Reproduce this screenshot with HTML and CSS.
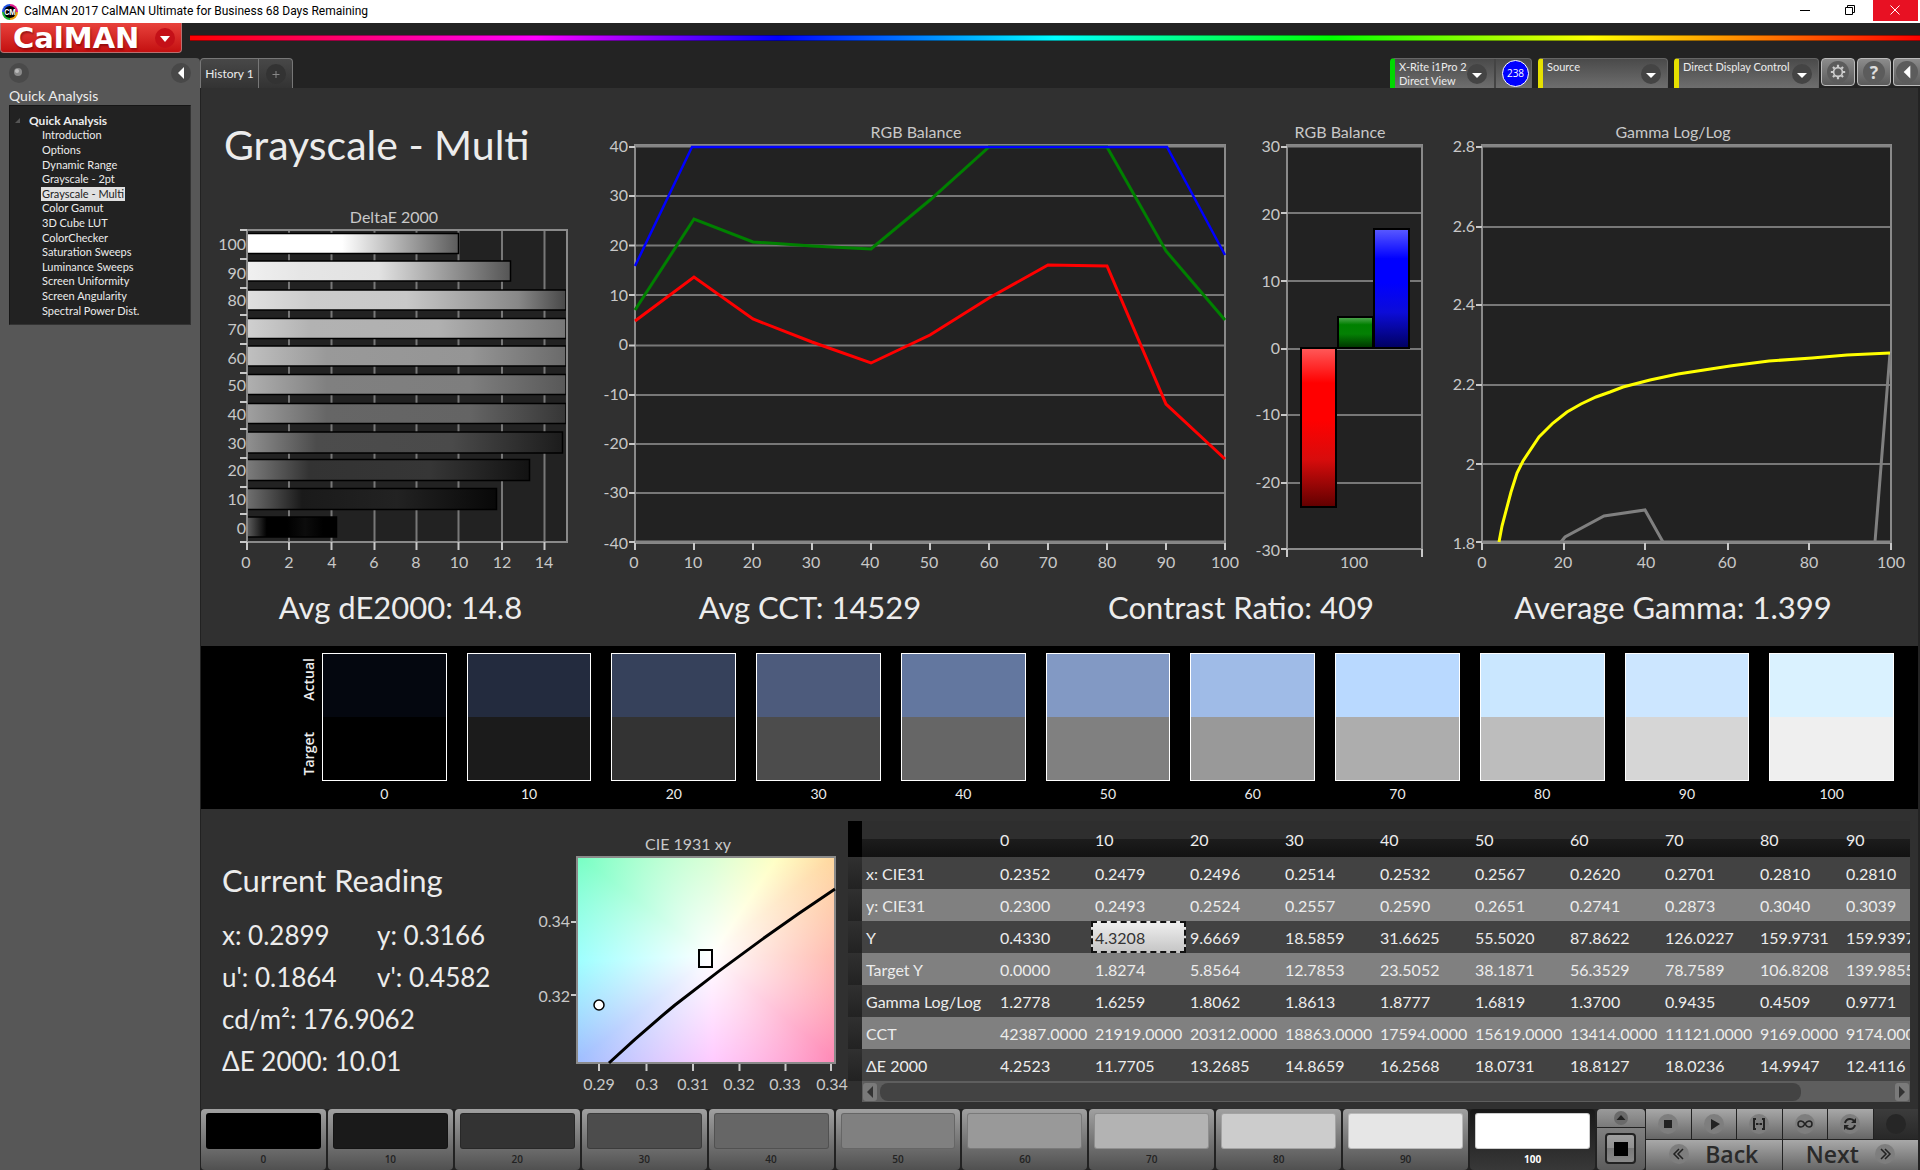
FILE: index.html
```html
<!DOCTYPE html>
<html lang="en">
<head>
<meta charset="utf-8">
<title>CalMAN 2017 CalMAN Ultimate for Business</title>
<link rel="stylesheet" href="styles.css">
</head>
<body>
<header class="titlebar">
  <svg class="app-icon" viewBox="0 0 16 16" aria-hidden="true">
    <path d="M8 0a8 8 0 0 1 8 8H8z" fill="#e0188c"/><path d="M16 8a8 8 0 0 1-8 8V8z" fill="#e8a010"/><path d="M8 16a8 8 0 0 1-8-8h8z" fill="#18b030"/><path d="M0 8a8 8 0 0 1 8-8v8z" fill="#2050e0"/>
    <circle cx="8" cy="8" r="6" fill="#000"/>
    <text x="8" y="11" text-anchor="middle" class="app-icon-text">CM</text>
  </svg>
  <span class="titlebar-text">CalMAN 2017 CalMAN Ultimate for Business 68 Days Remaining</span>
  <button class="win-btn" aria-label="Minimize"><svg viewBox="0 0 45 21"><path d="M17 10.500h10" stroke="#000" fill="none"/></svg></button>
  <button class="win-btn" aria-label="Restore"><svg viewBox="0 0 45 21"><path d="M17.500 7.500h7v7h-7zM19.500 7.500v-2h7v7h-2" stroke="#000" fill="none"/></svg></button>
  <button class="win-btn win-close" aria-label="Close"><svg viewBox="0 0 45 21"><path d="M17.500 5.500l9 9m0-9l-9 9" stroke="#fff" fill="none"/></svg></button>
</header>

<div class="brandbar">
  <button class="logo"><span>CalMAN</span>
    <svg viewBox="0 0 20 20" aria-hidden="true"><circle cx="10" cy="10" r="10" fill="#c41018"/><path d="M5 8h10l-5 6z" fill="#fff"/></svg>
  </button>
  <div class="rainbow"></div>
</div>

<div class="shell">
  <aside class="sidebar">
    <div class="sidebar-tools">
      <button class="round-btn" aria-label="Pin"><svg viewBox="0 0 20 20"><circle cx="10" cy="10" r="10" fill="#4a4a4a"/><circle cx="9" cy="9" r="4" fill="#8a8a8a"/><circle cx="8" cy="8" r="2" fill="#bbb"/></svg></button>
      <button class="round-btn" aria-label="Collapse"><svg viewBox="0 0 20 20"><circle cx="10" cy="10" r="10" fill="#484848"/><path d="M13 4v12l-6-6z" fill="#fff"/></svg></button>
    </div>
    <h2 class="sidebar-title">Quick Analysis</h2>
    <nav class="tree">
      <div class="tree-root"><svg viewBox="0 0 6 6" aria-hidden="true"><path d="M5 0v5H0z" fill="#555"/></svg>Quick Analysis</div>
      <ul>
        <li><a href="#introduction">Introduction</a></li>
        <li><a href="#options">Options</a></li>
        <li><a href="#dynamic-range">Dynamic Range</a></li>
        <li><a href="#grayscale-2pt">Grayscale - 2pt</a></li>
        <li><a href="#grayscale-multi" class="current">Grayscale - Multi</a></li>
        <li><a href="#color-gamut">Color Gamut</a></li>
        <li><a href="#cube-lut">3D Cube LUT</a></li>
        <li><a href="#colorchecker">ColorChecker</a></li>
        <li><a href="#saturation">Saturation Sweeps</a></li>
        <li><a href="#luminance">Luminance Sweeps</a></li>
        <li><a href="#uniformity">Screen Uniformity</a></li>
        <li><a href="#angularity">Screen Angularity</a></li>
        <li><a href="#spectral">Spectral Power Dist.</a></li>
      </ul>
    </nav>
  </aside>

  <div class="workspace">
    <div class="toolbar">
      <div class="tabs">
        <button class="tab">History 1</button>
        <button class="tab tab-add" aria-label="Add history"><svg viewBox="0 0 20 20"><circle cx="10" cy="10" r="10" fill="#333"/><path d="M6.500 10.500h7M10 7v7" stroke="#888" fill="none"/></svg></button>
      </div>
      <div class="devices">
        <div class="device device-meter">
          <button class="device-name">X-Rite i1Pro 2<br>Direct View</button>
          <svg class="drop" viewBox="0 0 20 20" aria-hidden="true"><circle cx="10" cy="10" r="10" fill="#444"/><path d="M5 9h10l-5 5z" fill="#fff"/></svg>
          <span class="badge">238</span>
        </div>
        <div class="device device-source">
          <select aria-label="Source device"><option>Source</option></select>
          <svg class="drop" viewBox="0 0 20 20" aria-hidden="true"><circle cx="10" cy="10" r="10" fill="#444"/><path d="M5 9h10l-5 5z" fill="#fff"/></svg>
        </div>
        <div class="device device-display">
          <select aria-label="Display device"><option>Direct Display Control</option></select>
          <svg class="drop" viewBox="0 0 20 20" aria-hidden="true"><circle cx="10" cy="10" r="10" fill="#444"/><path d="M5 9h10l-5 5z" fill="#fff"/></svg>
        </div>
        <button class="tool" aria-label="Settings"><svg viewBox="0 0 20 20"><circle cx="10" cy="10" r="10" fill="#5c5c5c"/><g stroke="#ccc" fill="none"><circle cx="10" cy="10" r="4" stroke-width="1.500"/><path stroke-width="2" d="M10 3.500v2M10 14.500v2M3.500 10h2M14.500 10h2M5.400 5.400l1.400 1.400M13.200 13.200l1.400 1.400M5.400 14.600l1.400-1.400M13.200 6.800l1.400-1.400"/></g></svg></button>
        <button class="tool" aria-label="Help"><svg viewBox="0 0 20 20"><circle cx="10" cy="10" r="10" fill="#5c5c5c"/><text x="10" y="16" text-anchor="middle" class="help-mark">?</text></svg></button>
        <button class="tool tool-last" aria-label="Hide"><svg viewBox="0 0 20 20"><circle cx="10" cy="10" r="10" fill="#5c5c5c"/><path d="M13 4v12l-6-6z" fill="#fff"/></svg></button>
      </div>
    </div>

    <main class="page">
      <section class="charts">
        <div class="first-col">
          <h1>Grayscale - Multi</h1>
          <svg class="chart" viewBox="201 200 399 380" role="img" aria-label="DeltaE 2000">
            <defs>
              <linearGradient id="b100"><stop offset="0" stop-color="#fff"/><stop offset=".45" stop-color="#fff"/><stop offset="1" stop-color="#5c5c5c"/></linearGradient>
              <linearGradient id="b90"><stop offset="0" stop-color="#f0f0f0"/><stop offset=".2" stop-color="#e6e6e6"/><stop offset=".5" stop-color="#e2e2e2"/><stop offset="1" stop-color="#555"/></linearGradient>
              <linearGradient id="b80"><stop offset="0" stop-color="#e0e0e0"/><stop offset=".2" stop-color="#ccc"/><stop offset=".5" stop-color="#c8c8c8"/><stop offset=".85" stop-color="#888"/><stop offset="1" stop-color="#484848"/></linearGradient>
              <linearGradient id="b70"><stop offset="0" stop-color="#d0d0d0"/><stop offset=".2" stop-color="#b2b2b2"/><stop offset=".6" stop-color="#b0b0b0"/><stop offset="1" stop-color="#777"/></linearGradient>
              <linearGradient id="b60"><stop offset="0" stop-color="#c0c0c0"/><stop offset=".25" stop-color="#999"/><stop offset=".7" stop-color="#959595"/><stop offset="1" stop-color="#6a6a6a"/></linearGradient>
              <linearGradient id="b50"><stop offset="0" stop-color="#b0b0b0"/><stop offset=".25" stop-color="#808080"/><stop offset=".7" stop-color="#7e7e7e"/><stop offset="1" stop-color="#585858"/></linearGradient>
              <linearGradient id="b40"><stop offset="0" stop-color="#a0a0a0"/><stop offset=".25" stop-color="#666"/><stop offset=".7" stop-color="#646464"/><stop offset="1" stop-color="#363636"/></linearGradient>
              <linearGradient id="b30"><stop offset="0" stop-color="#909090"/><stop offset=".22" stop-color="#4c4c4c"/><stop offset=".65" stop-color="#4a4a4a"/><stop offset="1" stop-color="#1c1c1c"/></linearGradient>
              <linearGradient id="b20"><stop offset="0" stop-color="#7c7c7c"/><stop offset=".22" stop-color="#333"/><stop offset=".65" stop-color="#363636"/><stop offset="1" stop-color="#121212"/></linearGradient>
              <linearGradient id="b10"><stop offset="0" stop-color="#707070"/><stop offset=".22" stop-color="#1a1a1a"/><stop offset=".6" stop-color="#222"/><stop offset="1" stop-color="#080808"/></linearGradient>
              <linearGradient id="b0"><stop offset="0" stop-color="#606060"/><stop offset=".22" stop-color="#000"/><stop offset=".45" stop-color="#000"/><stop offset=".65" stop-color="#0c0c0c"/><stop offset=".85" stop-color="#000"/></linearGradient>
            </defs>
            <text class="mid" x="394" y="223">DeltaE 2000</text>
            <rect x="247" y="230" width="320" height="312" class="plot"/>
            <path class="grid" d="M289 230V542M331.500 230V542M374.500 230V542M416.500 230V542M458.500 230V542M502 230V542M544.500 230V542"/>
            <g stroke="#000" stroke-width="1.500">
              <rect x="247" y="233.500" width="211.500" height="20" fill="url(#b100)"/>
              <rect x="247" y="261" width="263.500" height="20" fill="url(#b90)"/>
              <rect x="247" y="290" width="319" height="20" fill="url(#b80)"/>
              <rect x="247" y="318.500" width="319" height="20" fill="url(#b70)"/>
              <rect x="247" y="346" width="319" height="20" fill="url(#b60)"/>
              <rect x="247" y="374.500" width="319" height="20" fill="url(#b50)"/>
              <rect x="247" y="403.500" width="319" height="20" fill="url(#b40)"/>
              <rect x="247" y="432" width="315.500" height="21" fill="url(#b30)"/>
              <rect x="247" y="459.500" width="282.500" height="21" fill="url(#b20)"/>
              <rect x="247" y="488.500" width="249.500" height="21" fill="url(#b10)"/>
              <rect x="247" y="517" width="89.500" height="20" fill="url(#b0)"/>
            </g>
            <rect x="247" y="230" width="320" height="312" class="frame"/>
            <path class="tick" d="M240 230h7M240 259h7M240 288h7M240 315h7M240 344h7M240 373h7M240 402h7M240 429h7M240 458h7M240 487h7M240 514h7M240 542h7M247 542v8M289 542v8M331.500 542v8M374.500 542v8M416.500 542v8M458.500 542v8M502 542v8M544.500 542v8"/>
            <g class="end"><text x="246" y="250">100</text><text x="246" y="279">90</text><text x="246" y="306">80</text><text x="246" y="335">70</text><text x="246" y="364">60</text><text x="246" y="391">50</text><text x="246" y="420">40</text><text x="246" y="449">30</text><text x="246" y="476">20</text><text x="246" y="505">10</text><text x="246" y="534">0</text></g>
            <g class="mid"><text x="246" y="568">0</text><text x="289" y="568">2</text><text x="332" y="568">4</text><text x="374" y="568">6</text><text x="416" y="568">8</text><text x="459" y="568">10</text><text x="502" y="568">12</text><text x="544" y="568">14</text></g>
          </svg>
        </div>

        <svg class="chart" viewBox="600 110 650 470" role="img" aria-label="RGB Balance by level">
          <text class="mid" x="916" y="138">RGB Balance</text>
          <rect x="635" y="146" width="590" height="396" class="plot"/>
          <path class="grid" d="M635 196h590M635 245.500h590M635 295h590M635 345.500h590M635 395h590M635 444h590M635 493h590"/>
          <rect x="635" y="145" width="590" height="398" class="frame"/>
          <path class="frame-top" d="M635 146h590M635 542h590"/>
          <path class="tick" d="M629 147h6M629 196h6M629 245.500h6M629 295h6M629 345.500h6M629 395h6M629 444h6M629 493h6M629 542h6M635 543v7M694 543v7M753 543v7M812 543v7M871 543v7M930 543v7M989 543v7M1048 543v7M1107 543v7M1166 543v7M1225 543v7"/>
          <g fill="none" stroke-width="3">
            <polyline stroke="#008000" points="635,310 694,219 753,242 812,246 871,249 930,200 989,147 1107,147 1166,251 1225,320"/>
            <polyline stroke="#f00" points="635,321 694,277 753,319 812,342 871,363 930,335 989,298 1048,265 1107,266 1166,404 1225,459"/>
            <polyline stroke="#00f" stroke-width="2.500" points="635,266 692,147 1167,147 1225,255"/>
          </g>
          <g class="end"><text x="628" y="152">40</text><text x="628" y="201">30</text><text x="628" y="251">20</text><text x="628" y="301">10</text><text x="628" y="350">0</text><text x="628" y="400">-10</text><text x="628" y="449">-20</text><text x="628" y="498">-30</text><text x="628" y="549">-40</text></g>
          <g class="mid"><text x="634" y="568">0</text><text x="693" y="568">10</text><text x="752" y="568">20</text><text x="811" y="568">30</text><text x="870" y="568">40</text><text x="929" y="568">50</text><text x="989" y="568">60</text><text x="1048" y="568">70</text><text x="1107" y="568">80</text><text x="1166" y="568">90</text><text x="1225" y="568">100</text></g>
        </svg>

        <svg class="chart" viewBox="1250 110 190 470" role="img" aria-label="RGB Balance at 100">
          <defs>
            <linearGradient id="r" x2="0" y2="1"><stop offset="0" stop-color="#ff5a5a"/><stop offset=".22" stop-color="#f00"/><stop offset=".45" stop-color="#f00"/><stop offset=".7" stop-color="#d80c0c"/><stop offset="1" stop-color="#600000"/></linearGradient>
            <linearGradient id="g" x2="0" y2="1"><stop offset="0" stop-color="#55a855"/><stop offset=".25" stop-color="#008000"/><stop offset=".55" stop-color="#048004"/><stop offset="1" stop-color="#003400"/></linearGradient>
            <linearGradient id="b" x2="0" y2="1"><stop offset="0" stop-color="#5a5aff"/><stop offset=".25" stop-color="#00f"/><stop offset=".45" stop-color="#00f"/><stop offset=".7" stop-color="#0c0cd8"/><stop offset="1" stop-color="#000060"/></linearGradient>
          </defs>
          <text class="mid" x="1340" y="138">RGB Balance</text>
          <rect x="1287" y="146" width="135" height="403" class="plot"/>
          <path class="grid" d="M1287 213h135M1287 281h135M1287 349h135M1287 415h135M1287 483h135"/>
          <rect x="1287" y="145" width="135" height="404" class="frame"/>
          <path class="frame-top" d="M1287 146h135"/>
          <g stroke="#000" stroke-width="2"><rect x="1301" y="348" width="35" height="159" fill="url(#r)"/><rect x="1338" y="317" width="35" height="31" fill="url(#g)"/><rect x="1374" y="229" width="35" height="119" fill="url(#b)"/></g>
          <path class="tick" d="M1281 147h6M1281 213h6M1281 281h6M1281 349h6M1281 415h6M1281 483h6M1281 549h6M1287 549v8M1422 549v8"/>
          <g class="end"><text x="1280" y="152">30</text><text x="1280" y="220">20</text><text x="1280" y="287">10</text><text x="1280" y="354">0</text><text x="1280" y="420">-10</text><text x="1280" y="488">-20</text><text x="1280" y="556">-30</text></g>
          <text class="mid" x="1354" y="568">100</text>
        </svg>

        <svg class="chart" viewBox="1440 110 478 470" role="img" aria-label="Gamma Log/Log">
          <text class="mid" x="1673" y="138">Gamma Log/Log</text>
          <rect x="1482" y="146" width="409" height="396" class="plot"/>
          <path class="grid" d="M1482 227h409M1482 305h409M1482 385h409M1482 464h409"/>
          <rect x="1482" y="145" width="409" height="398" class="frame"/>
          <path class="frame-top" d="M1482 146h409M1482 542h409"/>
          <g fill="none" stroke-width="3">
            <path stroke="#808080" d="M1561 542l4-5 39-21 41-6 18 32M1875 542l15-189"/>
            <polyline stroke="#ff0" points="1499,542 1502,526 1511,492 1517,473 1523,461 1539,437 1553,423 1567,412 1581,404 1596,397 1610,392 1623,387 1650,380 1678,374 1704,370 1730,366 1769,361 1812,358 1847,355 1890,353"/>
          </g>
          <path class="tick" d="M1476 147h6M1476 227h6M1476 305h6M1476 385h6M1476 464h6M1476 542h6M1482 543v7M1564 543v7M1645 543v7M1728 543v7M1809 543v7M1891 543v7"/>
          <g class="end"><text x="1475" y="152">2.8</text><text x="1475" y="232">2.6</text><text x="1475" y="310">2.4</text><text x="1475" y="390">2.2</text><text x="1475" y="470">2</text><text x="1475" y="549">1.8</text></g>
          <g class="mid"><text x="1482" y="568">0</text><text x="1563" y="568">20</text><text x="1646" y="568">40</text><text x="1727" y="568">60</text><text x="1809" y="568">80</text><text x="1891" y="568">100</text></g>
        </svg>
      </section>

      <section class="stats">
        <p>Avg dE2000: 14.8</p><p>Avg CCT: 14529</p><p>Contrast Ratio: 409</p><p>Average Gamma: 1.399</p>
      </section>

      <section class="band">
        <div class="band-labels"><span>Actual</span><span>Target</span></div>
        <ol class="patches">
          <li><div class="patch" style="--a:#04070f;--t:#000"></div>0</li>
          <li><div class="patch" style="--a:#232b3e;--t:#1b1b1b"></div>10</li>
          <li><div class="patch" style="--a:#36415b;--t:#333"></div>20</li>
          <li><div class="patch" style="--a:#4d5b7c;--t:#4c4c4c"></div>30</li>
          <li><div class="patch" style="--a:#63779f;--t:#666"></div>40</li>
          <li><div class="patch" style="--a:#8299c4;--t:#808080"></div>50</li>
          <li><div class="patch" style="--a:#9fbbe7;--t:#999"></div>60</li>
          <li><div class="patch" style="--a:#b9d9ff;--t:#adadad"></div>70</li>
          <li><div class="patch" style="--a:#cae7ff;--t:#bdbdbd"></div>80</li>
          <li><div class="patch" style="--a:#cce6ff;--t:#d6d6d6"></div>90</li>
          <li><div class="patch" style="--a:#daf2ff;--t:#efefef"></div>100</li>
        </ol>
      </section>

      <section class="details">
        <div class="reading">
          <h2>Current Reading</h2>
          <div class="reading-grid">
            <span>x: 0.2899</span><span>y: 0.3166</span>
            <span>u': 0.1864</span><span>v': 0.4582</span>
            <span class="wide">cd/m²: 176.9062</span>
            <span class="wide">ΔE 2000: 10.01</span>
          </div>
        </div>

        <svg class="chart cie" viewBox="530 829 318 270" role="img" aria-label="CIE 1931 xy">
          <text class="mid" x="688" y="850">CIE 1931 xy</text>
          <foreignObject x="577" y="857" width="258" height="206"><div class="gamut" xmlns="http://www.w3.org/1999/xhtml"></div></foreignObject>
          <rect x="577" y="857" width="258" height="206" class="frame"/>
          <path d="M609 1063Q640 1034 675 1005Q755 942 835 889" fill="none" stroke="#000" stroke-width="3"/>
          <rect x="699" y="950" width="13" height="17" fill="none" stroke="#000" stroke-width="2"/>
          <circle cx="599" cy="1005" r="5" fill="#fff" stroke="#000" stroke-width="1.500"/>
          <path class="tick" d="M571 922h5M571 995h5M599 1064v7M646.500 1064v7M693 1064v7M739.500 1064v7M785.500 1064v7M831 1064v7"/>
          <g class="end"><text x="570" y="927">0.34</text><text x="570" y="1002">0.32</text></g>
          <g class="mid"><text x="599" y="1090">0.29</text><text x="647" y="1090">0.3</text><text x="693" y="1090">0.31</text><text x="739" y="1090">0.32</text><text x="785" y="1090">0.33</text><text x="832" y="1090">0.34</text></g>
        </svg>

        <div class="data">
          <table>
            <colgroup><col class="c-stub"><col class="c-name"><col span="8" class="c-val"><col class="c-80"><col></colgroup>
            <thead><tr><td></td><td></td><th>0</th><th>10</th><th>20</th><th>30</th><th>40</th><th>50</th><th>60</th><th>70</th><th>80</th><th>90</th></tr></thead>
            <tbody>
              <tr><td></td><th>x: CIE31</th><td>0.2352</td><td>0.2479</td><td>0.2496</td><td>0.2514</td><td>0.2532</td><td>0.2567</td><td>0.2620</td><td>0.2701</td><td>0.2810</td><td>0.2810</td></tr>
              <tr><td></td><th>y: CIE31</th><td>0.2300</td><td>0.2493</td><td>0.2524</td><td>0.2557</td><td>0.2590</td><td>0.2651</td><td>0.2741</td><td>0.2873</td><td>0.3040</td><td>0.3039</td></tr>
              <tr><td></td><th>Y</th><td>0.4330</td><td class="picked">4.3208</td><td>9.6669</td><td>18.5859</td><td>31.6625</td><td>55.5020</td><td>87.8622</td><td>126.0227</td><td>159.9731</td><td>159.9397</td></tr>
              <tr><td></td><th>Target Y</th><td>0.0000</td><td>1.8274</td><td>5.8564</td><td>12.7853</td><td>23.5052</td><td>38.1871</td><td>56.3529</td><td>78.7589</td><td>106.8208</td><td>139.9855</td></tr>
              <tr><td></td><th>Gamma Log/Log</th><td>1.2778</td><td>1.6259</td><td>1.8062</td><td>1.8613</td><td>1.8777</td><td>1.6819</td><td>1.3700</td><td>0.9435</td><td>0.4509</td><td>0.9771</td></tr>
              <tr><td></td><th>CCT</th><td>42387.0000</td><td>21919.0000</td><td>20312.0000</td><td>18863.0000</td><td>17594.0000</td><td>15619.0000</td><td>13414.0000</td><td>11121.0000</td><td>9169.0000</td><td>9174.0000</td></tr>
              <tr><td></td><th>ΔE 2000</th><td>4.2523</td><td>11.7705</td><td>13.2685</td><td>14.8659</td><td>16.2568</td><td>18.0731</td><td>18.8127</td><td>18.0236</td><td>14.9947</td><td>12.4116</td></tr>
            </tbody>
          </table>
          <div class="scrollbar">
            <button aria-label="Scroll left"><svg viewBox="0 0 14 18"><path d="M10 3v12L4 9z" fill="#333"/></svg></button>
            <div class="track"><div class="thumb"></div></div>
            <button aria-label="Scroll right"><svg viewBox="0 0 14 18"><path d="M4 3v12l6-6z" fill="#333"/></svg></button>
          </div>
        </div>
      </section>
    </main>

    <footer class="levels-bar">
      <div class="levels">
        <button class="level"><i style="background:#000"></i>0</button>
        <button class="level"><i style="background:#1a1a1a"></i>10</button>
        <button class="level"><i style="background:#333"></i>20</button>
        <button class="level"><i style="background:#4c4c4c"></i>30</button>
        <button class="level"><i style="background:#666"></i>40</button>
        <button class="level"><i style="background:#808080"></i>50</button>
        <button class="level"><i style="background:#999"></i>60</button>
        <button class="level"><i style="background:#b3b3b3"></i>70</button>
        <button class="level"><i style="background:#ccc"></i>80</button>
        <button class="level"><i style="background:#e6e6e6"></i>90</button>
        <button class="level active"><i style="background:#fff"></i>100</button>
      </div>
      <div class="pattern">
        <button aria-label="More"><svg viewBox="0 0 48 18"><circle cx="24" cy="9" r="7" fill="#6a6a6a"/><path d="M19.500 11h9L24 6z" fill="#222"/></svg></button>
        <button aria-label="Pattern window"><svg viewBox="0 0 48 42"><defs><linearGradient id="pw" x2="0" y2="1"><stop offset="0" stop-color="#a0a0a0"/><stop offset=".5" stop-color="#909090"/><stop offset=".5" stop-color="#787878"/><stop offset="1" stop-color="#8a8a8a"/></linearGradient></defs><rect x="9" y="6" width="29" height="29" rx="3" fill="url(#pw)" stroke="#222" stroke-width="2"/><rect x="17" y="14" width="14" height="14" fill="#000"/></svg></button>
      </div>
      <div class="transport">
        <button aria-label="Stop"><svg viewBox="0 0 20 20"><circle cx="10" cy="10" r="10"/><path d="M6 6h8v8H6z" class="ink"/></svg></button>
        <button aria-label="Play"><svg viewBox="0 0 20 20"><circle cx="10" cy="10" r="10"/><path d="M7 5l9 5-9 6z" class="ink"/></svg></button>
        <button aria-label="Read range"><svg viewBox="0 0 20 20"><circle cx="10" cy="10" r="10"/><path d="M7 5H5v10h2M13 5h2v10h-2M7 10h2M11 10h2M9.500 10h1" class="line"/></svg></button>
        <button aria-label="Continuous"><svg viewBox="0 0 20 20"><circle cx="10" cy="10" r="10"/><path d="M10 10c-2-3-3-3-4-3a3 3 0 0 0 0 6c1 0 2 0 4-3s3-3 4-3a3 3 0 0 1 0 6c-1 0-2 0-4-3z" class="line thin"/></svg></button>
        <button aria-label="Repeat"><svg viewBox="0 0 20 20"><circle cx="10" cy="10" r="10"/><path d="M5 9q1-4 5-4 3 0 4 2M15 11q-1 4-5 4-3 0-4-2" class="line"/><path d="M16 4v5h-5zM4 16v-5h5z" class="ink"/></svg></button>
        <button class="off" aria-label="Record"><svg viewBox="0 0 20 20"><circle cx="10" cy="10" r="10"/></svg></button>
        <button class="nav"><svg viewBox="0 0 20 20"><circle cx="10" cy="10" r="10"/><path d="M10 5l-5 5 5 5M14 5l-5 5 5 5" class="line thin"/></svg>Back</button>
        <button class="nav next">Next<svg viewBox="0 0 20 20"><circle cx="10" cy="10" r="10"/><path d="M6 5l5 5-5 5M10 5l5 5-5 5" class="line thin"/></svg></button>
      </div>
    </footer>
  </div>
</div>
</body>
</html>
```
FILE: styles.css
```css
:root {
  --ui: Lato, "Open Sans", sans-serif;
  --ink: #ececec;
}
* { box-sizing: border-box; }
body {
  margin: 0;
  min-height: 100vh;
  display: flex;
  flex-direction: column;
  background: #232323;
  color: var(--ink);
  font-family: var(--ui);
  font-size: 12px;
  overflow-x: hidden;
}
h1, h2, p, ul, ol { margin: 0; padding: 0; font-weight: 400; list-style: none; }
button, select {
  font: inherit;
  color: inherit;
  border: 0;
  padding: 0;
  margin: 0;
  background: none;
  border-radius: 0;
  appearance: none;
}
svg { display: block; }

/* window frame */
.titlebar {
  display: flex;
  height: 23px;
  background: #fff;
  color: #000;
  padding: 0 2px;
}
.app-icon { width: 16px; height: 16px; margin: 4px 6px 0 0; }
.app-icon-text { font: 700 7px "Inter", sans-serif; fill: #fff; }
.titlebar-text { flex: 1; font: 12px/23px Roboto, sans-serif; }
.win-btn { width: 45px; height: 21px; }
.win-close { background: #e81123; }

.brandbar { display: flex; gap: 8px; height: 35px; }
.logo {
  display: flex;
  align-items: center;
  justify-content: space-between;
  width: 182px;
  height: 30px;
  padding: 0 6px 0 12px;
  background: linear-gradient(#e8423c, #c41010);
  border: 1px solid #b87070;
  border-top: 0;
  border-radius: 0 0 4px 4px;
  font: 700 29px/30px "DejaVu Sans", sans-serif;
  color: #fff;
  text-shadow: 1px 2px 2px #6008;
}
.logo svg { width: 20px; height: 20px; }
.rainbow {
  flex: 1;
  height: 6px;
  margin-top: 12px;
  border: 1px solid #0006;
  border-width: 1px 0;
  background: linear-gradient(90deg, #f00, #f0f 20%, #00f 34%, #0ff 50%, #0f0 66%, #ff0 81%, #f00);
}

.shell { flex: 1; display: flex; }

/* sidebar */
.sidebar { width: 200px; flex: none; background: #575757; padding: 5px 9px; border-radius: 0 4px 0 0; }
.sidebar-tools { display: flex; justify-content: space-between; height: 20px; }
.round-btn { width: 20px; height: 20px; }
.sidebar-title { font-size: 14px; line-height: 26px; }
.tree {
  height: 220px;
  margin-top: -4px;
  padding: 7px 4px 0;
  background: #222;
  border: 1px solid #1a1a1a;
  border-color: #161616 #333 #333 #161616;
}
.tree-root { display: flex; align-items: center; gap: 8px; padding-left: 1px; font-weight: 700; font-size: 12px; line-height: 15px; }
.tree-root svg { width: 6px; height: 6px; }
.tree ul { display: grid; grid-auto-rows: 1fr; height: 190px; padding-left: 27px; font-size: 11px; }
.tree li { display: flex; align-items: center; }
.tree a { color: var(--ink); text-decoration: none; line-height: 14px; padding: 0 1px; white-space: nowrap; }
.tree .current { background: #e0e0e0; color: #222; }

/* toolbar */
.workspace { flex: 1; min-width: 0; display: flex; flex-direction: column; }
.toolbar { display: flex; justify-content: space-between; height: 30px; }
.tabs { display: flex; }
.tab {
  width: 59px;
  background: linear-gradient(#484848, #333);
  border: 1px solid #777;
  border-bottom: 0;
  border-radius: 4px 0 0 0;
  font-size: 12px;
  white-space: nowrap;
}
.tab-add { width: 34px; border-left: 0; border-radius: 0 4px 0 0; display: grid; place-items: center; }
.tab-add svg { width: 20px; height: 20px; }
.devices { display: flex; gap: 2px; font-size: 11px; }
.device {
  position: relative;
  display: flex;
  margin-right: 4px;
  background: linear-gradient(#4a4a4a, #6e6e6e);
  border: 1px solid #666;
  border-bottom: 0;
  border-left: 5px solid #e6e000;
  border-radius: 4px 4px 0 0;
  line-height: 14px;
}
.device-meter { width: 142px; border-left-color: #00d800; }
.device-source { width: 130px; }
.device-display { width: 145px; margin-right: 0; }
.device-name { flex: none; width: 101px; text-align: left; padding-left: 4px; border-right: 2px solid #444; }
.device select { flex: 1; padding: 0 0 14px 4px; }
.drop { position: absolute; width: 20px; height: 20px; right: 6px; top: 5px; }
.device-meter .drop { right: 44px; }
.badge {
  flex: none;
  width: 27px;
  height: 27px;
  margin: 1px 0 0 6px;
  border-radius: 50%;
  border: 1px solid #fff;
  background: #00f;
  color: #fff;
  font: 10px/25px "Open Sans", sans-serif;
  text-align: center;
}
.tool {
  display: grid;
  place-items: center;
  width: 34px;
  height: 28px;
  background: linear-gradient(#8c8c8c, #5a5a5a);
  border: 1px solid #bbb;
  border-radius: 4px;
}
.tool svg { width: 22px; height: 22px; }
.tool-last { width: 27px; border-right: 0; border-radius: 4px 0 0 4px; }
.help-mark { font: 700 16px "Open Sans", sans-serif; fill: #ddd; }

/* page */
.page, .levels-bar { margin-right: 2px; border-left: 1px solid #222; }
.page { background: #303030; flex: 1; }
.charts { display: grid; grid-template-columns: 399fr 650fr 190fr 478fr; align-items: end; }
.first-col h1 { display: flex; align-items: center; height: 112px; padding-left: 23px; font-size: 41px; white-space: nowrap; }
.chart { width: 100%; height: auto; font-size: 16px; fill: #c8c8c8; }
.mid { text-anchor: middle; }
.end { text-anchor: end; }
.plot { fill: #222; }
.grid { stroke: #787878; stroke-width: 2; fill: none; }
.frame { fill: none; stroke: #8a8a8a; stroke-width: 2; }
.frame-top { stroke: #858585; stroke-width: 3; fill: none; }
.tick { stroke: #c8c8c8; stroke-width: 2; fill: none; }

.stats {
  display: grid;
  grid-template-columns: 399fr 420fr 442fr 422fr;
  align-items: center;
  height: 66px;
  padding: 0 34px 12px 0;
  font-size: 31px;
  text-align: center;
  white-space: nowrap;
}

.band { display: flex; height: 163px; padding: 7px 24px 0 0; background: #000; }
.band-labels {
  width: 121px;
  height: 128px;
  display: flex;
  flex-direction: column;
  align-items: flex-end;
  justify-content: space-between;
  padding: 5px 4px 6px;
  font: 600 14px/18px "Open Sans", sans-serif;
}
.band-labels span { writing-mode: vertical-rl; transform: rotate(180deg); }
.patches { flex: 1; display: grid; grid-template-columns: repeat(11, 1fr); gap: 20px; font-size: 14px; line-height: 26px; text-align: center; }
.patch { height: 128px; border: 1px solid #fff; background: linear-gradient(var(--a) 50%, var(--t) 50%); }

.details { display: grid; grid-template-columns: 329fr 318fr 1062fr; padding-right: 8px; }
.reading { padding: 46px 0 0 21px; white-space: nowrap; }
.reading h2 { font-size: 31px; line-height: 50px; margin-bottom: 9px; }
.reading-grid { display: grid; grid-template-columns: 155px 1fr; font-size: 26px; line-height: 42px; }
.wide { grid-column: span 2; }
.cie { margin-top: 20px; }
.gamut {
  height: 100%;
  background:
    radial-gradient(circle 175px at 52% 48%, #fff, #fff0),
    conic-gradient(from 0deg at 52% 48%, #baffb4, #ffffa8 34deg, #ffd494 51deg, #ffa090 90deg, #ff80b0 130deg, #ffa8ff 179deg, #9cbcff 232deg, #80ffff 268deg, #70ffc0 307deg, #baffb4);
}

.data { min-width: 0; padding-top: 12px; }
table { width: 100%; table-layout: fixed; border-collapse: collapse; font-size: 16px; line-height: 30px; white-space: nowrap; }
.c-stub { width: 14px; }
.c-name { width: 134px; }
.c-val { width: 95px; }
.c-80 { width: 86px; }
th, td { height: 32px; padding: 1px 0 0 4px; font-weight: 400; text-align: left; overflow: hidden; }
thead tr { background: linear-gradient(#2e2e2e 50%, #1c1c1c 50%, #121212); }
thead th, thead td { height: 36px; }
tbody tr { background: #424242; }
tbody tr:nth-child(even) { background: #808080; }
tbody td:first-child { background: linear-gradient(#303030, #222); }
thead td:first-child { background: #000; }
.picked { background: linear-gradient(#f0f0f0, #c4c4c4); color: #333; outline: 2px dashed #111; outline-offset: -2px; }
.scrollbar { display: flex; align-items: center; gap: 3px; height: 21px; margin-left: 14px; padding: 0 1px; background: #5e5e5e; }
.scrollbar button { width: 14px; height: 18px; background: #7a7a7a; border-radius: 3px; }
.track { flex: 1; }
.thumb { width: 91%; height: 18px; background: #434343; border-radius: 8px; }

/* level picker */
.levels-bar { display: flex; height: 61px; gap: 1px; background: #222; }
.levels { flex: 1; display: grid; grid-template-columns: repeat(11, 1fr); gap: 2px; }
.level {
  display: flex;
  flex-direction: column;
  padding: 4px 5px 0;
  background: linear-gradient(#a0a0a0, #505050);
  border-radius: 4px;
  color: #222;
  font: 600 10px/20px "Open Sans", sans-serif;
  text-align: center;
}
.level i { display: block; align-self: stretch; height: 36px; border-radius: 3px; border: 1px solid #0003; }
.level.active { background: linear-gradient(#181818, #383838); color: #fff; font-weight: 700; }
.pattern { width: 48px; margin-left: 1px; display: grid; grid-template-rows: 18px 42px; gap: 1px; }
.pattern button { background: linear-gradient(#9a9a9a, #7a7a7a); border-radius: 4px 4px 0 0; }
.pattern button + button { background: linear-gradient(#808080, #5c5c5c); border-radius: 0 0 4px 4px; }
.transport { width: 272px; display: grid; grid-template-columns: repeat(6, 1fr); grid-template-rows: 30px 30px; gap: 1px; }
.transport button { display: flex; align-items: center; justify-content: center; background: linear-gradient(#a8a8a8, #666); }
.transport svg { width: 20px; height: 20px; }
.transport circle { fill: #7e7e7e; }
.transport .off { background: linear-gradient(#3c3c3c, #282828); }
.transport .off circle { fill: #262626; }
.ink { fill: #222; }
.line { fill: none; stroke: #222; stroke-width: 2; }
.thin { stroke-width: 1.500px; }
.transport .nav { grid-column: span 3; gap: 16px; padding-bottom: 2px; color: #2a2a2a; font: 600 23px/28px "Open Sans", sans-serif; }
```
